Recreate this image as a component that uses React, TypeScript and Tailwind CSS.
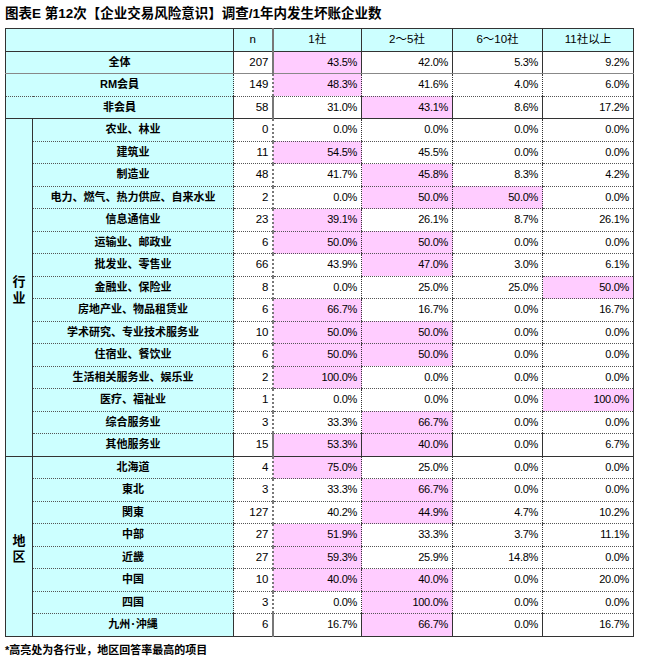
type Row = {
  label: string;
  n: number;
  values: string[];
  hl: number[];
};

const topRows: Row[] = [
  { label: "全体", n: 207, values: ["43.5%", "42.0%", "5.3%", "9.2%"], hl: [0] },
  { label: "RM会員", n: 149, values: ["48.3%", "41.6%", "4.0%", "6.0%"], hl: [0] },
  { label: "非会員", n: 58, values: ["31.0%", "43.1%", "8.6%", "17.2%"], hl: [1] },
];

const industryRows: Row[] = [
  { label: "农业、林业", n: 0, values: ["0.0%", "0.0%", "0.0%", "0.0%"], hl: [] },
  { label: "建筑业", n: 11, values: ["54.5%", "45.5%", "0.0%", "0.0%"], hl: [0] },
  { label: "制造业", n: 48, values: ["41.7%", "45.8%", "8.3%", "4.2%"], hl: [1] },
  { label: "电力、燃气、热力供应、自来水业", n: 2, values: ["0.0%", "50.0%", "50.0%", "0.0%"], hl: [1, 2] },
  { label: "信息通信业", n: 23, values: ["39.1%", "26.1%", "8.7%", "26.1%"], hl: [0] },
  { label: "运输业、邮政业", n: 6, values: ["50.0%", "50.0%", "0.0%", "0.0%"], hl: [0, 1] },
  { label: "批发业、零售业", n: 66, values: ["43.9%", "47.0%", "3.0%", "6.1%"], hl: [1] },
  { label: "金融业、保险业", n: 8, values: ["0.0%", "25.0%", "25.0%", "50.0%"], hl: [3] },
  { label: "房地产业、物品租赁业", n: 6, values: ["66.7%", "16.7%", "0.0%", "16.7%"], hl: [0] },
  { label: "学术研究、专业技术服务业", n: 10, values: ["50.0%", "50.0%", "0.0%", "0.0%"], hl: [0, 1] },
  { label: "住宿业、餐饮业", n: 6, values: ["50.0%", "50.0%", "0.0%", "0.0%"], hl: [0, 1] },
  { label: "生活相关服务业、娱乐业", n: 2, values: ["100.0%", "0.0%", "0.0%", "0.0%"], hl: [0] },
  { label: "医疗、福祉业", n: 1, values: ["0.0%", "0.0%", "0.0%", "100.0%"], hl: [3] },
  { label: "综合服务业", n: 3, values: ["33.3%", "66.7%", "0.0%", "0.0%"], hl: [1] },
  { label: "其他服务业", n: 15, values: ["53.3%", "40.0%", "0.0%", "6.7%"], hl: [0, 1] },
];

const regionRows: Row[] = [
  { label: "北海道", n: 4, values: ["75.0%", "25.0%", "0.0%", "0.0%"], hl: [0] },
  { label: "東北", n: 3, values: ["33.3%", "66.7%", "0.0%", "0.0%"], hl: [1] },
  { label: "関東", n: 127, values: ["40.2%", "44.9%", "4.7%", "10.2%"], hl: [1] },
  { label: "中部", n: 27, values: ["51.9%", "33.3%", "3.7%", "11.1%"], hl: [0] },
  { label: "近畿", n: 27, values: ["59.3%", "25.9%", "14.8%", "0.0%"], hl: [0] },
  { label: "中国", n: 10, values: ["40.0%", "40.0%", "0.0%", "20.0%"], hl: [0, 1] },
  { label: "四国", n: 3, values: ["0.0%", "100.0%", "0.0%", "0.0%"], hl: [1] },
  { label: "九州･沖縄", n: 6, values: ["16.7%", "66.7%", "0.0%", "16.7%"], hl: [1] },
];

const headers = ["1社", "2～5社", "6～10社", "11社以上"];

function DataCells({ row, bottom }: { row: Row; bottom: string }) {
  return (
    <>
      <td className={`bg-white text-right pr-[3px] text-[11.5px] border-l border-l-[#333] ${bottom}`}>{row.n}</td>
      {row.values.map((v, i) => (
        <td
          key={i}
          className={`text-right pr-[4px] tracking-[-0.3px] ${i === 0 ? "border-l-2 border-l-[#777]" : "border-l border-l-[#333]"} ${bottom} ${row.hl.includes(i) ? "bg-[#ffccff]" : "bg-white"}`}
        >
          {v}
        </td>
      ))}
    </>
  );
}

function GroupRows({ title, rows }: { title: string[]; rows: Row[] }) {
  return (
    <>
      {rows.map((row, idx) => {
        const last = idx === rows.length - 1;
        const bottom = last ? "border-b border-b-[#333]" : "border-b border-dotted border-b-[#555]";
        return (
          <tr key={row.label} className="h-[22.5px]">
            {idx === 0 && (
              <td
                rowSpan={rows.length}
                className="bg-[#ccffff] border-r border-r-[#333] border-b border-b-[#333] text-center align-middle font-bold text-[13px] leading-[16px] pt-[6px]"
              >
                {title.map((t) => (
                  <div key={t}>{t}</div>
                ))}
              </td>
            )}
            <td className={`bg-[#ccffff] text-center font-bold ${bottom}`}>{row.label}</td>
            <DataCells row={row} bottom={bottom} />
          </tr>
        );
      })}
    </>
  );
}

export default function App() {
  return (
    <div className="w-[645px] h-[669px] bg-white text-black pl-[5px] pt-[5px] font-['Liberation_Sans','Noto_Sans_CJK_SC',sans-serif]">
      <h1 className="text-[13.5px] font-bold leading-[18px]">图表E 第12次【企业交易风险意识】调查/1年内发生坏账企业数</h1>

      <table className="mt-[5px] w-[628px] table-fixed border-collapse border border-[#333] text-[11px] leading-none">
        <colgroup>
          <col className="w-[27px]" />
          <col className="w-[201px]" />
          <col className="w-[39px]" />
          <col className="w-[89px]" />
          <col className="w-[91px]" />
          <col className="w-[90px]" />
          <col className="w-[91px]" />
        </colgroup>
        <tbody>
          <tr className="h-[22.5px] bg-[#ccffff] border-b border-b-[#333] text-[11.5px]">
            <td colSpan={2}></td>
            <td className="text-center border-l border-l-[#333]">n</td>
            {headers.map((h, i) => (
              <td
                key={h}
                className={`text-center ${i === 0 ? "border-l-2 border-l-[#777]" : "border-l border-l-[#333]"}`}
              >
                {h}
              </td>
            ))}
          </tr>

          {topRows.map((row, idx) => {
            const bottom =
              idx === 0
                ? "border-b border-b-[#888]"
                : idx === 1
                  ? "border-b border-dotted border-b-[#555]"
                  : "border-b border-b-[#333]";
            return (
              <tr key={row.label} className="h-[22.5px]">
                <td colSpan={2} className={`bg-[#ccffff] text-center font-bold ${bottom}`}>
                  {row.label}
                </td>
                <DataCells row={row} bottom={bottom} />
              </tr>
            );
          })}

          <GroupRows title={["行", "业"]} rows={industryRows} />
          <GroupRows title={["地", "区"]} rows={regionRows} />
        </tbody>
      </table>

      <p className="mt-[6px] text-[11px] leading-[14px] font-bold">*高亮处为各行业，地区回答率最高的项目</p>
    </div>
  );
}
